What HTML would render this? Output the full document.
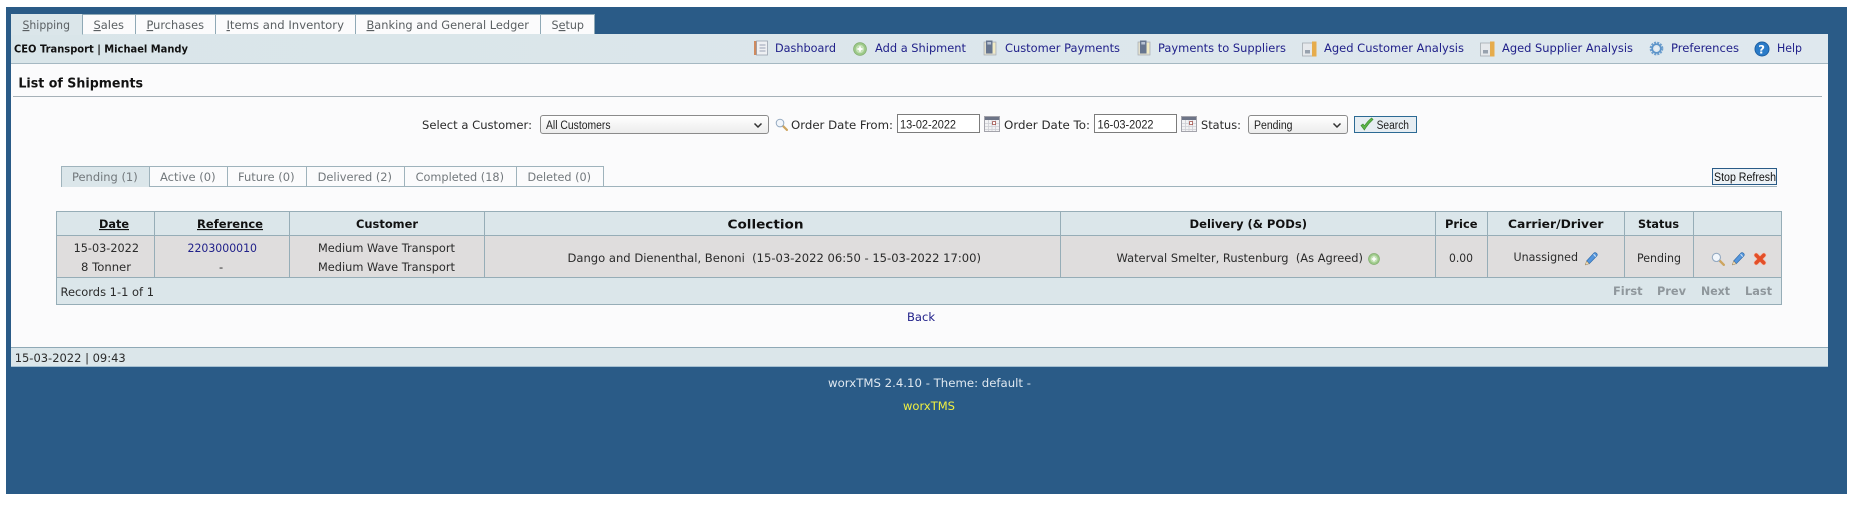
<!DOCTYPE html>
<html lang="en">
<head>
<meta charset="utf-8">
<title>List of Shipments</title>
<style>
html,body{margin:0;padding:0;width:1856px;height:508px;overflow:hidden;background:#fff}
.b{position:absolute;box-sizing:border-box}
svg.t{position:absolute;left:0;top:0}
svg.t text{font-family:"DejaVu Sans","Liberation Sans",sans-serif;font-size:11.5px;fill:#2a2a2a;white-space:pre}
svg.t .a{font-family:"Liberation Sans",sans-serif;font-size:11.5px;fill:#222}
svg.t .h{font-weight:bold;fill:#111}
svg.t .l{fill:#21218a}
svg.t .tb{fill:#5a5f62}
svg.t .tp{fill:#72787c}
svg.t .g{font-weight:bold;fill:#8f979c}
</style>
</head>
<body>
<div class="b" style="left:6px;top:7px;width:1841px;height:487px;background:#2a5b87"></div>
<div class="b" style="left:11px;top:34px;width:1817px;height:313px;background:#fbfbfc"></div>
<div class="b" style="left:11px;top:34px;width:1817px;height:30px;background:linear-gradient(90deg,#d9e5e9,#dfe8ee);border-bottom:1px solid #a5b8c2"></div>
<!-- main tabs -->
<div class="b" style="left:11px;top:14px;width:72px;height:21px;background:#dbe6ea;border:1px solid #dbe6ea;border-right:1px solid #8fa9b6"></div>
<div class="b" style="left:82px;top:14px;width:54px;height:20px;background:#fbfbfc;border:1px solid #8fa9b6;border-bottom:0"></div>
<div class="b" style="left:135px;top:14px;width:81px;height:20px;background:#fbfbfc;border:1px solid #8fa9b6;border-bottom:0"></div>
<div class="b" style="left:215px;top:14px;width:141px;height:20px;background:#fbfbfc;border:1px solid #8fa9b6;border-bottom:0"></div>
<div class="b" style="left:355px;top:14px;width:186px;height:20px;background:#fbfbfc;border:1px solid #8fa9b6;border-bottom:0"></div>
<div class="b" style="left:540px;top:14px;width:55px;height:20px;background:#fbfbfc;border:1px solid #8fa9b6;border-bottom:0"></div>
<!-- title rule -->
<div class="b" style="left:13px;top:96px;width:1809px;height:1px;background:#a6b1b8"></div>
<!-- filter controls -->
<div class="b" style="left:540px;top:115px;width:229px;height:19px;background:linear-gradient(#fff,#ececec);border:1px solid #8b8b8b;border-radius:3px"></div>
<div class="b" style="left:897px;top:114px;width:83px;height:19px;background:#fff;border:1px solid #7c7c7c"></div>
<div class="b" style="left:1094px;top:114px;width:83px;height:19px;background:#fff;border:1px solid #7c7c7c"></div>
<div class="b" style="left:1248px;top:115px;width:100px;height:19px;background:linear-gradient(#fff,#ececec);border:1px solid #8b8b8b;border-radius:3px"></div>
<div class="b" style="left:1354px;top:116px;width:63px;height:17px;background:#e6edf2;border:1px solid #2c6a94"></div>
<!-- status tabs -->
<div class="b" style="left:61px;top:186px;width:1716px;height:1px;background:#9fb3bc"></div>
<div class="b" style="left:61px;top:166px;width:89px;height:21px;background:#dbe6ea;border:1px solid #9fb3bc;border-bottom:0"></div>
<div class="b" style="left:149px;top:166px;width:79px;height:20px;background:#fbfbfc;border:1px solid #9fb3bc;border-bottom:0"></div>
<div class="b" style="left:227px;top:166px;width:80px;height:20px;background:#fbfbfc;border:1px solid #9fb3bc;border-bottom:0"></div>
<div class="b" style="left:306px;top:166px;width:99px;height:20px;background:#fbfbfc;border:1px solid #9fb3bc;border-bottom:0"></div>
<div class="b" style="left:404px;top:166px;width:113px;height:20px;background:#fbfbfc;border:1px solid #9fb3bc;border-bottom:0"></div>
<div class="b" style="left:516px;top:166px;width:88px;height:20px;background:#fbfbfc;border:1px solid #9fb3bc;border-bottom:0"></div>
<div class="b" style="left:1712px;top:168px;width:65px;height:17px;background:#edf2f6;border:1px solid #2a5b87"></div>
<!-- table -->
<div class="b" style="left:56px;top:211px;width:1726px;height:94px;background:#dbe6ea;border:1px solid #96adb7"></div>
<div class="b" style="left:57px;top:235px;width:1724px;height:43px;background:#dfdddd;border-top:1px solid #96adb7;border-bottom:1px solid #96adb7"></div>
<div class="b" style="left:154px;top:212px;width:1px;height:66px;background:#96adb7"></div>
<div class="b" style="left:289px;top:212px;width:1px;height:66px;background:#96adb7"></div>
<div class="b" style="left:484px;top:212px;width:1px;height:66px;background:#96adb7"></div>
<div class="b" style="left:1060px;top:212px;width:1px;height:66px;background:#96adb7"></div>
<div class="b" style="left:1435px;top:212px;width:1px;height:66px;background:#96adb7"></div>
<div class="b" style="left:1487px;top:212px;width:1px;height:66px;background:#96adb7"></div>
<div class="b" style="left:1624px;top:212px;width:1px;height:66px;background:#96adb7"></div>
<div class="b" style="left:1693px;top:212px;width:1px;height:66px;background:#96adb7"></div>
<!-- footer bar -->
<div class="b" style="left:11px;top:347px;width:1817px;height:20px;background:#dbe6ea;border-top:1px solid #8fa9b6;border-bottom:1px solid #a5c0d2"></div>

<svg class="t" width="1856" height="508" viewBox="0 0 1856 508" xmlns="http://www.w3.org/2000/svg">
<defs>
<symbol id="plus" viewBox="0 0 14 14"><circle cx="7" cy="7" r="6.4" fill="#9cc988" stroke="#83ad70" stroke-width=".8"/><circle cx="7" cy="7" r="4.2" fill="#c3e0b5"/><path d="M7 4.4v5.2M4.4 7h5.2" stroke="#fff" stroke-width="1.7"/></symbol>
<symbol id="book" viewBox="0 0 14 16"><rect x="0" y="1" width="2.6" height="14" fill="#cf8a5e"/><rect x="2.6" y="1" width="10.9" height="14" fill="#eef0f3" stroke="#9aa3b0" stroke-width=".8"/><path d="M5.5 5h6M5.5 8h6M5.5 11h6" stroke="#9aa2b5" stroke-width="1"/></symbol>
<symbol id="pay" viewBox="0 0 14 16"><rect x="1" y="2" width="12" height="13" fill="#e2dfce" stroke="#a6acb3" stroke-width=".7"/><rect x="3" y="0.5" width="6.5" height="13" fill="#66758f"/><rect x="4.3" y="2" width="3.8" height="2.5" fill="#b7c2d3"/><rect x="9.7" y="3" width="2.4" height="10" fill="#f1ebc4"/></symbol>
<symbol id="aged" viewBox="0 0 15 16"><rect x="0.5" y="2" width="10" height="13" fill="#e6e9ec" stroke="#a4abb1" stroke-width=".8"/><rect x="3" y="9" width="5" height="3.5" fill="#98a2ae"/><rect x="10" y="0.5" width="4.5" height="15" fill="#e6ac4c"/></symbol>
<symbol id="gear" viewBox="0 0 16 16"><circle cx="8" cy="8" r="6" fill="none" stroke="#6d9fce" stroke-width="2.6" stroke-dasharray="2.1 1.1"/><circle cx="8" cy="8" r="4.6" fill="none" stroke="#5b93c9" stroke-width="1.8"/><circle cx="8" cy="8" r="2.2" fill="#e6eef5"/></symbol>
<symbol id="mag" viewBox="0 0 14 14"><path d="M8.4 8.4L12.8 12.8" stroke="#cda560" stroke-width="2.4" stroke-linecap="round"/><circle cx="5.4" cy="5.4" r="4.1" fill="#f2f6fb" stroke="#96abc2" stroke-width="1.1"/></symbol>
<symbol id="pen" viewBox="0 0 14 14"><path d="M2.6 9L9.8 1.2C10.6 .5 11.8 .6 12.6 1.4C13.4 2.2 13.4 3.2 12.7 4L5.2 11.7Z" fill="#5596dd" stroke="#2f6cac" stroke-width=".7"/><path d="M2.6 9L1.2 13L5.2 11.7Z" fill="#f1dcb2" stroke="#917d5a" stroke-width=".5"/><path d="M9.6 2.2L11.8 4.6" stroke="#d5e6f7" stroke-width="1"/></symbol>
<symbol id="x" viewBox="0 0 14 14"><path d="M3.2 3.2L10.8 10.8M10.8 3.2L3.2 10.8" stroke="#f3c0b0" stroke-width="5" stroke-linecap="round"/><path d="M3.2 3.2L10.8 10.8M10.8 3.2L3.2 10.8" stroke="#e34f28" stroke-width="3.6" stroke-linecap="round"/></symbol>
<symbol id="cal" viewBox="0 0 16 16"><rect x=".5" y=".5" width="15" height="15" fill="#f2f2f4" stroke="#a3a3ab"/><rect x="1" y="1" width="14" height="3" fill="#6d7487"/><path d="M1 7.5h14M1 10.5h14M1 13.5h14M4.5 4v11M8 4v11M11.5 4v11" stroke="#cdced4" stroke-width=".8"/><rect x="8.6" y="5.6" width="3" height="3" fill="#fff" stroke="#a3544e" stroke-width=".8"/></symbol>
</defs>

<!-- tabs text -->
<text x="22.5" y="29" textLength="47.5" lengthAdjust="spacingAndGlyphs" class="tb"><tspan text-decoration="underline">S</tspan>hipping</text>
<text x="93.5" y="29" textLength="30.5" lengthAdjust="spacingAndGlyphs" class="tb"><tspan text-decoration="underline">S</tspan>ales</text>
<text x="146.5" y="29" textLength="57.5" lengthAdjust="spacingAndGlyphs" class="tb"><tspan text-decoration="underline">P</tspan>urchases</text>
<text x="226.5" y="29" textLength="117.5" lengthAdjust="spacingAndGlyphs" class="tb"><tspan text-decoration="underline">I</tspan>tems and Inventory</text>
<text x="366.5" y="29" textLength="162.5" lengthAdjust="spacingAndGlyphs" class="tb"><tspan text-decoration="underline">B</tspan>anking and General Ledger</text>
<text x="551.5" y="29" textLength="32.5" lengthAdjust="spacingAndGlyphs" class="tb">S<tspan text-decoration="underline">e</tspan>tup</text>

<!-- header strip -->
<text x="14" y="52.5" textLength="174" lengthAdjust="spacingAndGlyphs" class="h" style="font-size:10.5px">CEO Transport | Michael Mandy</text>

<use href="#book" x="754" y="40" width="14" height="16"/>
<text x="775" y="52" textLength="61" lengthAdjust="spacingAndGlyphs" class="l">Dashboard</text>
<use href="#plus" x="853" y="42" width="14" height="14"/>
<text x="875" y="52" textLength="91" lengthAdjust="spacingAndGlyphs" class="l">Add a Shipment</text>
<use href="#pay" x="983" y="40" width="14" height="16"/>
<text x="1005" y="52" textLength="115" lengthAdjust="spacingAndGlyphs" class="l">Customer Payments</text>
<use href="#pay" x="1137" y="40" width="14" height="16"/>
<text x="1158" y="52" textLength="128" lengthAdjust="spacingAndGlyphs" class="l">Payments to Suppliers</text>
<use href="#aged" x="1302" y="41" width="15" height="16"/>
<text x="1324" y="52" textLength="140" lengthAdjust="spacingAndGlyphs" class="l">Aged Customer Analysis</text>
<use href="#aged" x="1480" y="41" width="15" height="16"/>
<text x="1502" y="52" textLength="131" lengthAdjust="spacingAndGlyphs" class="l">Aged Supplier Analysis</text>
<use href="#gear" x="1649" y="41" width="15" height="15"/>
<text x="1671" y="52" textLength="68" lengthAdjust="spacingAndGlyphs" class="l">Preferences</text>
<circle cx="1762" cy="49" r="7" fill="#2a7bc8" stroke="#1d5fa3"/>
<text x="1758.2" y="53.5" style="font-size:11.5px;font-weight:bold;fill:#fff">?</text>
<text x="1777" y="52" textLength="25" lengthAdjust="spacingAndGlyphs" class="l">Help</text>

<!-- title -->
<text x="18.4" y="87.5" textLength="124.6" lengthAdjust="spacingAndGlyphs" class="h" style="font-size:13px">List of Shipments</text>

<!-- filters -->
<text x="422" y="129" textLength="110" lengthAdjust="spacingAndGlyphs">Select a Customer:</text>
<text x="546" y="129" textLength="64.5" lengthAdjust="spacingAndGlyphs" class="a">All Customers</text>
<path d="M754.5 123.5l3.5 3.5 3.5-3.5" fill="none" stroke="#333" stroke-width="1.5"/>
<use href="#mag" x="775" y="118" width="13" height="13"/>
<text x="791" y="129" textLength="102" lengthAdjust="spacingAndGlyphs">Order Date From:</text>
<text x="900" y="128.5" textLength="56" lengthAdjust="spacingAndGlyphs" class="a">13-02-2022</text>
<use href="#cal" x="984" y="116" width="16" height="16"/>
<text x="1004" y="129" textLength="86" lengthAdjust="spacingAndGlyphs">Order Date To:</text>
<text x="1097.5" y="128.5" textLength="56" lengthAdjust="spacingAndGlyphs" class="a">16-03-2022</text>
<use href="#cal" x="1181" y="116" width="16" height="16"/>
<text x="1201" y="129" textLength="40" lengthAdjust="spacingAndGlyphs">Status:</text>
<text x="1254" y="129" textLength="38.5" lengthAdjust="spacingAndGlyphs" class="a">Pending</text>
<path d="M1333.5 123.5l3.5 3.5 3.5-3.5" fill="none" stroke="#333" stroke-width="1.5"/>
<path d="M1361 125.5l3.4 4.5c2-3.6 4.6-7 8.6-10.5l-1.4-1.5c-3 2.2-5.2 5-7.2 7.8l-1.4-1.8z" fill="#5cb548" stroke="#3f8f33" stroke-width=".7"/>
<text x="1376.6" y="129" textLength="32.4" lengthAdjust="spacingAndGlyphs" class="a">Search</text>

<!-- status tabs -->
<text x="72" y="181" textLength="65.7" lengthAdjust="spacingAndGlyphs" class="tp">Pending (1)</text>
<text x="160" y="181" textLength="55.6" lengthAdjust="spacingAndGlyphs" class="tp">Active (0)</text>
<text x="238" y="181" textLength="56.6" lengthAdjust="spacingAndGlyphs" class="tp">Future (0)</text>
<text x="317.6" y="181" textLength="74.4" lengthAdjust="spacingAndGlyphs" class="tp">Delivered (2)</text>
<text x="415.6" y="181" textLength="88.4" lengthAdjust="spacingAndGlyphs" class="tp">Completed (18)</text>
<text x="527.5" y="181" textLength="63.5" lengthAdjust="spacingAndGlyphs" class="tp">Deleted (0)</text>
<text x="1714" y="181" textLength="62" lengthAdjust="spacingAndGlyphs" class="a" style="fill:#111">Stop Refresh</text>

<!-- table header -->
<text x="99" y="228" textLength="30" lengthAdjust="spacingAndGlyphs" class="h" text-decoration="underline">Date</text>
<text x="197" y="228" textLength="66" lengthAdjust="spacingAndGlyphs" class="h" text-decoration="underline">Reference</text>
<text x="356" y="228" textLength="62" lengthAdjust="spacingAndGlyphs" class="h">Customer</text>
<text x="727.5" y="228.5" textLength="76" lengthAdjust="spacingAndGlyphs" class="h" style="font-size:12.5px">Collection</text>
<text x="1189.5" y="228" textLength="117.5" lengthAdjust="spacingAndGlyphs" class="h">Delivery (&amp; PODs)</text>
<text x="1445" y="228" textLength="32.5" lengthAdjust="spacingAndGlyphs" class="h">Price</text>
<text x="1508" y="228" textLength="95.5" lengthAdjust="spacingAndGlyphs" class="h">Carrier/Driver</text>
<text x="1638" y="228" textLength="41" lengthAdjust="spacingAndGlyphs" class="h">Status</text>

<!-- table row -->
<text x="73.6" y="252" textLength="65.4" lengthAdjust="spacingAndGlyphs">15-03-2022</text>
<text x="81" y="271" textLength="50" lengthAdjust="spacingAndGlyphs">8 Tonner</text>
<text x="187.5" y="252" textLength="69.5" lengthAdjust="spacingAndGlyphs" class="l">2203000010</text>
<text x="219" y="271">-</text>
<text x="318" y="252" textLength="137" lengthAdjust="spacingAndGlyphs">Medium Wave Transport</text>
<text x="318" y="271" textLength="137" lengthAdjust="spacingAndGlyphs">Medium Wave Transport</text>
<text x="567.5" y="262" textLength="413.5" lengthAdjust="spacingAndGlyphs">Dango and Dienenthal, Benoni  (15-03-2022 06:50 - 15-03-2022 17:00)</text>
<text x="1116.5" y="262" textLength="246.5" lengthAdjust="spacingAndGlyphs">Waterval Smelter, Rustenburg  (As Agreed)</text>
<use href="#plus" x="1368" y="253" width="12" height="12"/>
<text x="1449" y="262" textLength="24" lengthAdjust="spacingAndGlyphs">0.00</text>
<text x="1513.5" y="261" textLength="64.5" lengthAdjust="spacingAndGlyphs">Unassigned</text>
<use href="#pen" x="1584" y="252" width="14" height="14"/>
<text x="1637" y="262" textLength="44" lengthAdjust="spacingAndGlyphs">Pending</text>
<use href="#mag" x="1711" y="252" width="14" height="14"/>
<use href="#pen" x="1731" y="252" width="14" height="14"/>
<use href="#x" x="1753" y="252" width="14" height="14"/>

<!-- table footer -->
<text x="60.5" y="296" textLength="93.5" lengthAdjust="spacingAndGlyphs">Records 1-1 of 1</text>
<text x="1613" y="295" textLength="29.6" lengthAdjust="spacingAndGlyphs" class="g">First</text>
<text x="1657" y="295" textLength="29" lengthAdjust="spacingAndGlyphs" class="g">Prev</text>
<text x="1701" y="295" textLength="29" lengthAdjust="spacingAndGlyphs" class="g">Next</text>
<text x="1745" y="295" textLength="27" lengthAdjust="spacingAndGlyphs" class="g">Last</text>

<text x="907" y="321" textLength="28" lengthAdjust="spacingAndGlyphs" class="l">Back</text>
<text x="14.7" y="362" textLength="111" lengthAdjust="spacingAndGlyphs">15-03-2022 | 09:43</text>
<text x="828" y="387" textLength="203" lengthAdjust="spacingAndGlyphs" style="fill:#dfe8f0">worxTMS 2.4.10 - Theme: default -</text>
<text x="903" y="410" textLength="52" lengthAdjust="spacingAndGlyphs" style="fill:#f0f040">worxTMS</text>
</svg>
</body>
</html>
